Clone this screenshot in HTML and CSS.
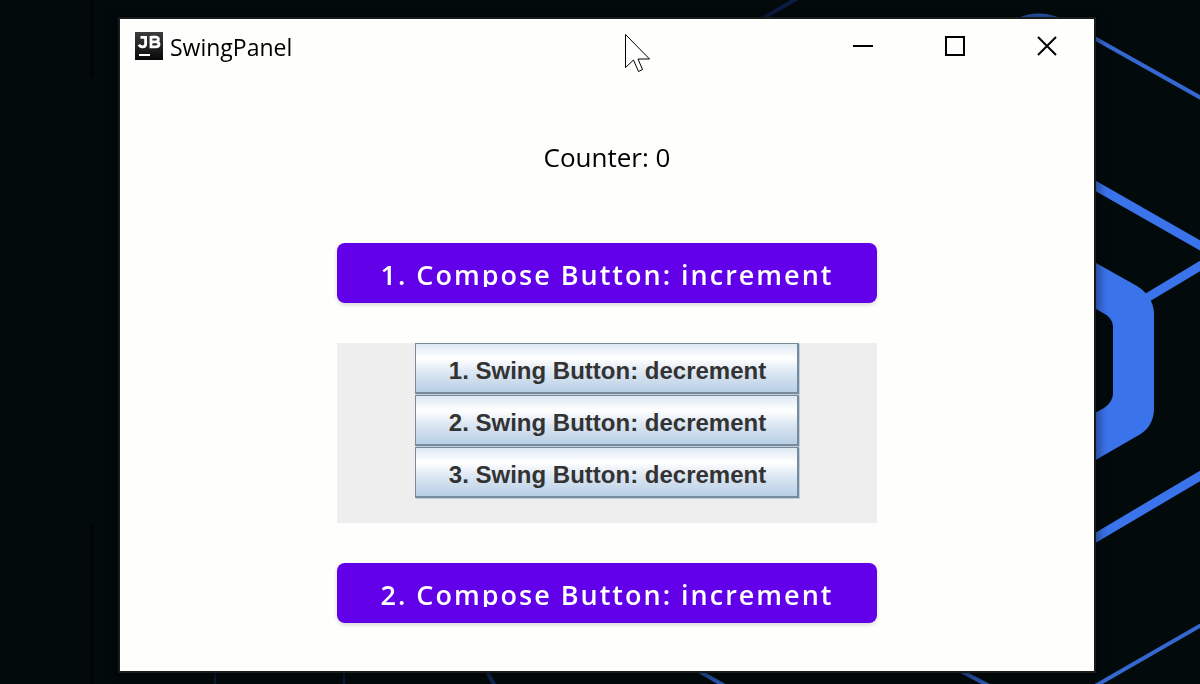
FILE: index.html
```html
<!DOCTYPE html>
<html lang="en">
<head>
<meta charset="utf-8">
<title>SwingPanel</title>
<link rel="stylesheet" href="styles.css">
</head>
<body>
<svg class="wallpaper" viewBox="0 0 1200 684" preserveAspectRatio="xMidYMid slice" aria-hidden="true">
  <g fill="none" stroke="#3467d0" stroke-width="4">
    <path d="M1080 30L1210 103M1090 689L1210 620"/>
    <path d="M680 660L730 689M940 660L995 689" stroke="#2b59b5"/>
    <path d="M1010 24Q1039 7 1068 24" stroke="#2b59b5"/>
    <path d="M758 21L798 -2" stroke="#0c1c42"/>
    <path d="M485 668L496 688" stroke="#10265a"/>
    <path d="M344 668V684" stroke="#0a1a4c" stroke-width="2"/>
    <path d="M215 668V684" stroke="#071a33" stroke-width="2"/>
    <path d="M92 0V78M92 524V684" stroke="#010506" stroke-width="4"/>
  </g>
  <g fill="none" stroke="#3b73ea" stroke-width="9">
    <path d="M1080 177L1210 251M1140 302L1210 260M1080 547L1210 470"/>
  </g>
  <path fill="#3b73ea" d="M1080 254L1137 286Q1153 296 1154 313V410Q1153 427 1139 435L1080 469V421L1104 408Q1113 402 1113 393V326Q1112 317 1103 313L1080 300Z"/>
</svg>
<main class="window">
  <header class="titlebar">
    <svg class="app-icon" viewBox="0 0 28 28" aria-hidden="true">
      <defs><linearGradient id="jb" x1="0" y1="0" x2="0" y2="1"><stop offset="0" stop-color="#3d3d3d"/><stop offset="1" stop-color="#080808"/></linearGradient></defs>
      <path fill="url(#jb)" d="M0 0H28V28H0Z"/>
      <g fill="none" stroke="#fff" stroke-width="2.8">
        <path d="M5.500 5.300H10.600V12Q10.600 14.800 7.600 14.800Q5 14.800 3.800 12.800"/>
        <path d="M16 5.200H20.600Q23.400 5.200 23.400 7.400Q23.400 9.800 20.600 9.800H16M20.600 9.800Q24 9.800 24 12.300Q24 14.800 20.800 14.800H16V4"/>
      </g>
      <path fill="#fff" d="M4 22H15V24H4Z"/>
    </svg>
    <h1 class="title">SwingPanel</h1>
    <div class="controls">
      <button class="control" type="button" aria-label="Minimize"><svg viewBox="0 0 20 20"><path d="M0 10H20"/></svg></button>
      <button class="control" type="button" aria-label="Maximize"><svg viewBox="0 0 20 20"><path d="M1 1H19V19H1Z"/></svg></button>
      <button class="control" type="button" aria-label="Close"><svg viewBox="0 0 20 20"><path d="M1 1L19 19M19 1L1 19"/></svg></button>
    </div>
  </header>
  <section class="content">
    <p class="counter">Counter: 0</p>
    <button class="compose" type="button"><span class="compose-label">1. Compose Button: increment</span></button>
    <div class="swing-panel">
      <button class="swing" type="button">1. Swing Button: decrement</button>
      <button class="swing" type="button">2. Swing Button: decrement</button>
      <button class="swing" type="button">3. Swing Button: decrement</button>
    </div>
    <button class="compose" type="button"><span class="compose-label">2. Compose Button: increment</span></button>
  </section>
</main>
<svg class="cursor" viewBox="0 0 26 38" aria-hidden="true"><path fill="#fff" stroke="#000" stroke-width="1" d="M.5 .5V33.500L8.500 26L13.500 37.500L17.500 35.500L13 25H24.500Z"/></svg>
</body>
</html>
```
FILE: styles.css
```css
* { box-sizing: border-box; }

body {
  display: flex;
  min-height: 100vh;
  margin: 0;
  padding: 17px 104px 11px 118px;
  background: #020a0c;
  font-family: "Open Sans", "Noto Sans", sans-serif;
  color: #000;
}

.wallpaper {
  position: fixed;
  inset: 0;
  width: 100%;
  height: 100%;
  z-index: -1;
}

.window {
  display: flex;
  flex: 1;
  flex-direction: column;
  border: 2px solid #191c1c;
  background: #fefefc;
  box-shadow: 0 2px 10px 2px rgba(0, 0, 0, 0.5);
}

.titlebar {
  display: flex;
  align-items: center;
  height: 54px;
  padding: 0 1px 0 15px;
}

.app-icon {
  width: 28px;
  height: 28px;
}

.title {
  flex: 1;
  margin: 0 0 0 7px;
  padding-top: 2px;
  font-size: 23px;
  font-weight: 400;
  line-height: 32px;
}

.controls { display: flex; }

.control {
  display: grid;
  place-items: center;
  width: 92px;
  height: 54px;
  padding: 0;
  border: 0;
  background: none;
}

.control svg {
  width: 20px;
  height: 20px;
  fill: none;
  stroke: #000;
  stroke-width: 2;
}

.content {
  display: flex;
  flex-direction: column;
  gap: 40px;
  align-items: center;
  padding: 64px 20px 40px;
}

.counter {
  margin: 0 0 26px;
  font-size: 26px;
  line-height: 40px;
}

.compose {
  display: flex;
  align-items: center;
  justify-content: center;
  width: 100%;
  max-width: 540px;
  height: 60px;
  padding: 0 20px;
  border: 0;
  border-radius: 8px;
  background: #6200ea;
  box-shadow: 0 2px 4px rgba(0, 0, 0, 0.16);
  color: #fff;
  font-family: inherit;
  font-size: 27px;
  font-weight: 600;
  letter-spacing: 2px;
}

.compose-label {
  height: 28px;
  overflow: hidden;
  line-height: 32px;
  white-space: nowrap;
}

.swing-panel {
  display: flex;
  flex-direction: column;
  align-items: center;
  width: 100%;
  max-width: 540px;
  min-height: 180px;
  background: #eeeeee;
}

.swing {
  height: 51px;
  margin-bottom: 1px;
  padding: 6px 31px 0 33px;
  border: solid #7a8a99;
  border-width: 1px 2px 2px 1px;
  background: linear-gradient(#dde8f3, #fff 30%, #dbe6f2 60%, #b8cfe5);
  box-shadow: 1px 1px #b8cfe5;
  color: #333;
  font-family: "Liberation Sans", Arial, sans-serif;
  font-size: 24px;
  font-weight: 700;
  white-space: nowrap;
}

.cursor {
  position: absolute;
  top: 34px;
  left: 625px;
  width: 26px;
  height: 38px;
}
```
